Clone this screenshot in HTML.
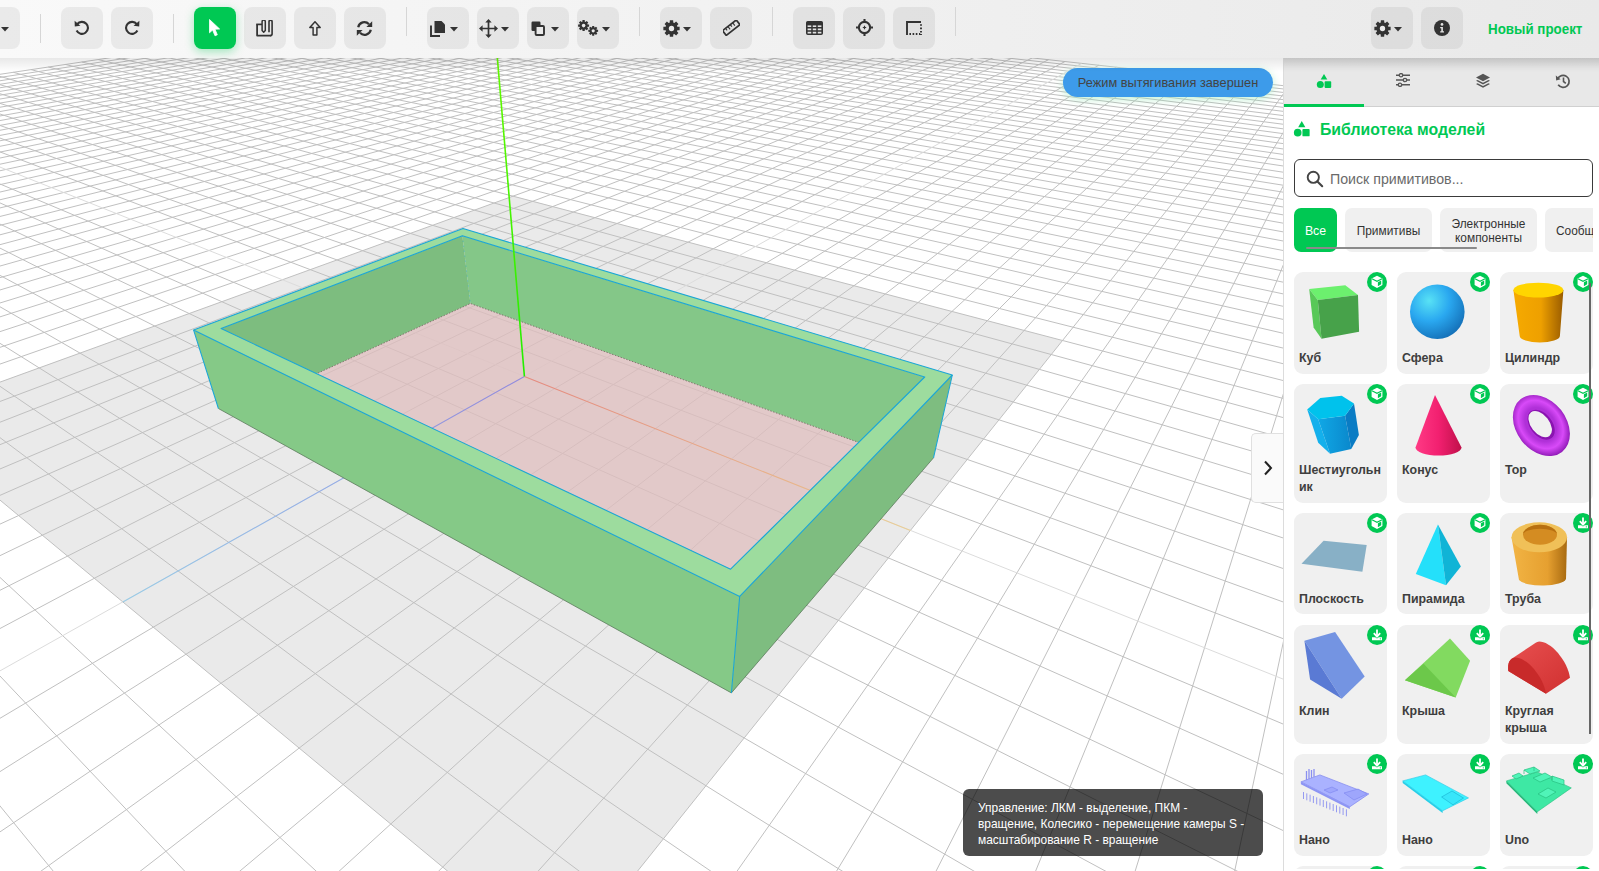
<!DOCTYPE html>
<html><head><meta charset="utf-8"><style>
*{box-sizing:border-box;margin:0;padding:0}
html,body{width:1599px;height:871px;overflow:hidden;background:#fff;font-family:"Liberation Sans",sans-serif}
#tb{position:absolute;left:0;top:0;width:1599px;height:58px;background:linear-gradient(90deg,#f9f9f9 0%,#f1f1f1 50%,#e9e9e9 100%);z-index:5}
.b{position:absolute;top:7px;width:42px;height:42px;border-radius:8px;background:rgba(0,0,0,0.06)}
.b svg{display:block}
.sep{position:absolute;width:1px;height:29px;background:#d6d6d6}
#vp{position:absolute;left:0;top:58px;width:1284px;height:813px;overflow:hidden}
#shadow{position:absolute;left:0;top:58px;width:1599px;height:14px;background:linear-gradient(180deg,rgba(0,0,0,0.09),rgba(0,0,0,0));z-index:4}
#sb{position:absolute;left:1283px;top:58px;width:316px;height:813px;background:#fff;border-left:1px solid #dcdcdc;overflow:hidden}
#pill{position:absolute;left:1063px;top:68px;width:210px;height:29px;border-radius:15px;background:#3d9bea;color:#444;font-size:12.8px;line-height:30px;text-align:center;white-space:nowrap;box-shadow:0 2px 8px rgba(0,200,83,0.25),0 0 6px rgba(255,255,255,0.8)}
#tog{position:absolute;left:1251px;top:433px;width:32px;height:70px;background:#fafafa;border:1px solid #e0e0e0;border-right:none;border-radius:5px 0 0 5px;display:flex;align-items:center;justify-content:center}
#tip{position:absolute;left:963px;top:789px;width:300px;height:67px;border-radius:6px;background:rgba(0,0,0,0.7);color:#fff;font-size:11.95px;line-height:16px;padding:11px 0 0 15px;white-space:nowrap}
</style></head>
<body>
<div id="tb"><div class="b" style="left:-22px;"><svg width="8" height="5" viewBox="0 0 8 5" style="position:absolute;left:23.3px;top:19.6px"><path d="M0,0 L8,0 L4,4.6Z" fill="#333333"/></svg></div><div class="sep" style="left:40px;top:14px"></div><div class="b" style="left:61px;"><svg style="position:absolute;left:12.5px;top:13.3px" width="16" height="15" viewBox="0 0 16 15"><path d="M3.2,4.2 A6,6 0 1 1 2.6,10.6" fill="none" stroke="#333" stroke-width="2.1"/><path d="M0.6,0.8 L0.8,6.6 L6.4,5.8Z" fill="#333"/></svg></div><div class="b" style="left:111px;"><svg style="position:absolute;left:13.3px;top:13.3px" width="16" height="15" viewBox="0 0 16 15"><g transform="translate(16,0) scale(-1,1)"><path d="M3.2,4.2 A6,6 0 1 1 2.6,10.6" fill="none" stroke="#333" stroke-width="2.1"/><path d="M0.6,0.8 L0.8,6.6 L6.4,5.8Z" fill="#333"/></g></svg></div><div class="sep" style="left:173px;top:14px"></div><div class="b" style="left:194px;background:#00c853;box-shadow:0 3px 10px rgba(0,200,83,0.35);"><svg style="position:absolute;left:15px;top:12px" width="12" height="18" viewBox="0 0 12 18"><path d="M0.5,0.5 L0.5,13.8 L3.6,11 L6,16.8 L8.3,15.8 L6,10.2 L10.6,10Z" fill="#fff" stroke="#fff" stroke-width="0.8" stroke-linejoin="round"/></svg></div><div class="b" style="left:244px;"><svg style="position:absolute;left:11.2px;top:12.8px" width="19" height="17" viewBox="0 0 19 17"><path d="M2.1,4.4 V15.6 H16.2" fill="none" stroke="#333" stroke-width="1.8" stroke-linejoin="round"/><path d="M1.2,4.4 H7" stroke="#333" stroke-width="1.7"/><path d="M7.1,10.6 V1.7 A1.6,1.6 0 0 1 10.3,1.7 V10.6 L8.7,12.3Z" fill="none" stroke="#333" stroke-width="1.5" stroke-linejoin="round"/><path d="M14,12.2 V1.7 A1.5,1.5 0 0 1 17.1,1.7 V13.8 A1.8,1.8 0 0 1 15.3,15.6" fill="none" stroke="#333" stroke-width="1.6"/></svg></div><div class="b" style="left:294px;"><svg style="position:absolute;left:14.8px;top:14px" width="12" height="15" viewBox="0 0 12 15"><path d="M6,0.7 L11.2,6.4 H7.9 V13.9 H4.1 V6.4 H0.8Z" fill="none" stroke="#333" stroke-width="1.45" stroke-linejoin="round"/></svg></div><div class="b" style="left:344px;"><svg style="position:absolute;left:12.2px;top:13.6px" width="17" height="15" viewBox="0 0 17 15"><path d="M2.2,6.2 A6.3,6.3 0 0 1 13,3.2" fill="none" stroke="#333" stroke-width="2.2"/><path d="M16.2,0.2 L16.2,6 L10.4,6Z" fill="#333"/><path d="M14.8,8.8 A6.3,6.3 0 0 1 4,11.8" fill="none" stroke="#333" stroke-width="2.2"/><path d="M0.8,14.8 L0.8,9 L6.6,9Z" fill="#333"/></svg></div><div class="sep" style="left:406px;top:7px"></div><div class="b" style="left:427px;"><svg style="position:absolute;left:3.2px;top:12.5px" width="16" height="17" viewBox="0 0 16 17"><path d="M1,5.5 V16 H10" fill="none" stroke="#333" stroke-width="1.9"/><path d="M4.5,1 H11.5 L15,4.5 V13 H4.5Z" fill="#333"/></svg><svg width="8" height="5" viewBox="0 0 8 5" style="position:absolute;left:23px;top:19.6px"><path d="M0,0 L8,0 L4,4.6Z" fill="#333333"/></svg></div><div class="b" style="left:477px;"><svg style="position:absolute;left:1.6px;top:11.6px" width="19" height="19" viewBox="0 0 19 19"><path d="M9.5,2 V17 M2,9.5 H17" stroke="#333" stroke-width="1.7"/><path d="M9.5,0 L6.3,3.6 H12.7Z M9.5,19 L6.3,15.4 H12.7Z M0,9.5 L3.6,6.3 V12.7Z M19,9.5 L15.4,6.3 V12.7Z" fill="#333"/></svg><svg width="8" height="5" viewBox="0 0 8 5" style="position:absolute;left:24px;top:19.6px"><path d="M0,0 L8,0 L4,4.6Z" fill="#333333"/></svg></div><div class="b" style="left:527px;"><svg style="position:absolute;left:4px;top:13.5px" width="14" height="15" viewBox="0 0 14 15"><rect x="0.5" y="0.5" width="9" height="9.5" rx="1.2" fill="#333"/><rect x="4.6" y="5" width="8.4" height="9" rx="1" fill="#e9e9e9" stroke="#333" stroke-width="1.9"/></svg><svg width="8" height="5" viewBox="0 0 8 5" style="position:absolute;left:24px;top:19.6px"><path d="M0,0 L8,0 L4,4.6Z" fill="#333333"/></svg></div><div class="b" style="left:577px;"><svg style="position:absolute;left:0.8px;top:13.3px" width="21" height="16" viewBox="0 0 21 16"><path d="M4.01,1.77 L4.38,1.64 L4.49,0.11 L6.71,0.11 L6.82,1.64 L7.19,1.77 L7.53,1.93 L8.69,0.93 L10.27,2.51 L9.27,3.67 L9.43,4.01 L9.56,4.38 L11.09,4.49 L11.09,6.71 L9.56,6.82 L9.43,7.19 L9.27,7.53 L10.27,8.69 L8.69,10.27 L7.53,9.27 L7.19,9.43 L6.82,9.56 L6.71,11.09 L4.49,11.09 L4.38,9.56 L4.01,9.43 L3.67,9.27 L2.51,10.27 L0.93,8.69 L1.93,7.53 L1.77,7.19 L1.64,6.82 L0.11,6.71 L0.11,4.49 L1.64,4.38 L1.77,4.01 L1.93,3.67 L0.93,2.51 L2.51,0.93 L3.67,1.93Z" fill="#333333"/><circle cx="5.6" cy="5.6" r="1.79" fill="#e9e9e9"/><path d="M13.78,7.38 L14.11,7.27 L14.21,5.90 L16.19,5.90 L16.29,7.27 L16.62,7.38 L16.93,7.53 L17.96,6.63 L19.37,8.04 L18.47,9.07 L18.62,9.38 L18.73,9.71 L20.10,9.81 L20.10,11.79 L18.73,11.89 L18.62,12.22 L18.47,12.53 L19.37,13.56 L17.96,14.97 L16.93,14.07 L16.62,14.22 L16.29,14.33 L16.19,15.70 L14.21,15.70 L14.11,14.33 L13.78,14.22 L13.47,14.07 L12.44,14.97 L11.03,13.56 L11.93,12.53 L11.78,12.22 L11.67,11.89 L10.30,11.79 L10.30,9.81 L11.67,9.71 L11.78,9.38 L11.93,9.07 L11.03,8.04 L12.44,6.63 L13.47,7.53Z" fill="#333333"/><circle cx="15.2" cy="10.8" r="1.60" fill="#e9e9e9"/></svg><svg width="8" height="5" viewBox="0 0 8 5" style="position:absolute;left:25px;top:19.6px"><path d="M0,0 L8,0 L4,4.6Z" fill="#333333"/></svg></div><div class="sep" style="left:639px;top:7px"></div><div class="b" style="left:660px;"><svg style="position:absolute;left:2.6px;top:12.6px" width="17" height="17" viewBox="0 0 17 17"><path d="M6.15,2.83 L6.68,2.63 L6.85,0.37 L10.15,0.37 L10.32,2.63 L10.85,2.83 L11.37,3.07 L13.09,1.58 L15.42,3.91 L13.93,5.63 L14.17,6.15 L14.37,6.68 L16.63,6.85 L16.63,10.15 L14.37,10.32 L14.17,10.85 L13.93,11.37 L15.42,13.09 L13.09,15.42 L11.37,13.93 L10.85,14.17 L10.32,14.37 L10.15,16.63 L6.85,16.63 L6.68,14.37 L6.15,14.17 L5.63,13.93 L3.91,15.42 L1.58,13.09 L3.07,11.37 L2.83,10.85 L2.63,10.32 L0.37,10.15 L0.37,6.85 L2.63,6.68 L2.83,6.15 L3.07,5.63 L1.58,3.91 L3.91,1.58 L5.63,3.07Z" fill="#333333"/><circle cx="8.5" cy="8.5" r="2.66" fill="#e9e9e9"/></svg><svg width="8" height="5" viewBox="0 0 8 5" style="position:absolute;left:23px;top:19.6px"><path d="M0,0 L8,0 L4,4.6Z" fill="#333333"/></svg></div><div class="b" style="left:710px;"><svg style="position:absolute;left:12.6px;top:12.8px" width="17" height="16" viewBox="0 0 17 16"><g transform="rotate(-38 8.5 8)"><rect x="-0.2" y="4.6" width="17.4" height="6" fill="none" stroke="#333" stroke-width="1.7"/><path d="M3.6,4.8 V7.2 M6.6,4.8 V8.2 M9.6,4.8 V7.2 M12.6,4.8 V8.2" stroke="#333" stroke-width="1.1"/></g></svg></div><div class="sep" style="left:772px;top:7px"></div><div class="b" style="left:793px;"><svg style="position:absolute;left:12.6px;top:14px" width="17" height="14" viewBox="0 0 17 14"><rect x="0.8" y="0.8" width="15.4" height="12.4" rx="1" fill="none" stroke="#333" stroke-width="1.6"/><rect x="0.8" y="0.8" width="15.4" height="3.6" fill="#333"/><path d="M1,6.8 H16 M1,10 H16 M6,4 V13 M11,4 V13" stroke="#333" stroke-width="1.5"/></svg></div><div class="b" style="left:843px;"><svg style="position:absolute;left:12.5px;top:12.4px" width="17" height="17" viewBox="0 0 17 17"><circle cx="8.5" cy="8.5" r="5.6" fill="none" stroke="#333" stroke-width="2.1"/><path d="M8.5,0 V4 M8.5,13 V17 M0,8.5 H4 M13,8.5 H17" stroke="#333" stroke-width="2.1"/><path d="M8.5,6.8 V10.2 M6.8,8.5 H10.2" stroke="#333" stroke-width="1.2"/></svg></div><div class="b" style="left:893px;"><svg style="position:absolute;left:13px;top:14px" width="16" height="14" viewBox="0 0 16 14"><path d="M1,14 V1 H15" fill="none" stroke="#333" stroke-width="1.9"/><path d="M15,3.2 V4.8 M15,6.6 V8.2 M15,10 V11.6 M15,13 V14 M3.4,13 H5 M6.6,13 H8.2 M9.8,13 H11.4 M13,13 H14.2" stroke="#333" stroke-width="1.9"/></svg></div><div class="sep" style="left:955px;top:7px"></div><div class="b" style="left:1371px;"><svg style="position:absolute;left:2.6px;top:12.6px" width="17" height="17" viewBox="0 0 17 17"><path d="M6.15,2.83 L6.68,2.63 L6.85,0.37 L10.15,0.37 L10.32,2.63 L10.85,2.83 L11.37,3.07 L13.09,1.58 L15.42,3.91 L13.93,5.63 L14.17,6.15 L14.37,6.68 L16.63,6.85 L16.63,10.15 L14.37,10.32 L14.17,10.85 L13.93,11.37 L15.42,13.09 L13.09,15.42 L11.37,13.93 L10.85,14.17 L10.32,14.37 L10.15,16.63 L6.85,16.63 L6.68,14.37 L6.15,14.17 L5.63,13.93 L3.91,15.42 L1.58,13.09 L3.07,11.37 L2.83,10.85 L2.63,10.32 L0.37,10.15 L0.37,6.85 L2.63,6.68 L2.83,6.15 L3.07,5.63 L1.58,3.91 L3.91,1.58 L5.63,3.07Z" fill="#333333"/><circle cx="8.5" cy="8.5" r="2.66" fill="#e9e9e9"/></svg><svg width="8" height="5" viewBox="0 0 8 5" style="position:absolute;left:23px;top:19.6px"><path d="M0,0 L8,0 L4,4.6Z" fill="#333333"/></svg></div><div class="b" style="left:1421px;"><svg style="position:absolute;left:12.8px;top:13px" width="16" height="16" viewBox="0 0 16 16"><circle cx="8" cy="8" r="8" fill="#333"/><circle cx="8" cy="4.4" r="1.35" fill="#e4e4e4"/><path d="M6.2,6.9 H8.9 V11.3 H10 V12.6 H6.2 V11.3 H7.3 V8.2 H6.2Z" fill="#e4e4e4"/></svg></div><div style="position:absolute;left:1488px;top:21px;font-size:14.6px;font-weight:bold;color:#00c853;white-space:nowrap;transform:scaleX(0.915);transform-origin:0 0">Новый проект</div></div>
<div id="vp"><svg width="1284" height="813" viewBox="0 0 1284 813" style="position:absolute;left:0;top:0">
<rect width="100%" height="100%" fill="#ffffff"/>
<path d="M513.0,138.1 L1062.5,282.5 L561.8,907.7 L-99.0,360.0Z" fill="#eaeaea"/>
<path d="M500.5,-58.9L-4038.4,623.0M500.5,-58.9L2637.2,177.4M508.5,-58.1L-4160.9,653.9M492.6,-57.8L2664.0,185.9M516.6,-57.2L-4293.1,687.2M484.5,-56.5L2692.1,194.9M524.9,-56.2L-4435.9,723.2M476.3,-55.3L2721.6,204.3M533.2,-55.3L-4590.9,762.3M468.0,-54.1L2752.4,214.2M541.7,-54.4L-4759.5,804.8M459.5,-52.8L2784.8,224.5M550.3,-53.4L-4943.8,851.2M450.9,-51.5L2818.9,235.4M558.9,-52.5L-5145.9,902.2M442.1,-50.2L2854.7,246.8M567.7,-51.5L-5368.6,958.3M433.2,-48.8L2892.5,258.9M576.6,-50.5L-5615.2,1020.5M424.1,-47.5L2932.3,271.6M585.7,-49.5L-5889.7,1089.7M414.9,-46.1L2974.4,285.1M594.8,-48.5L-6197.4,1167.3M405.4,-44.7L3019.0,299.3M604.1,-47.5L-6544.3,1254.8M395.8,-43.2L3066.3,314.4M613.5,-46.4L-6938.7,1354.2M386.1,-41.8L3116.5,330.4M623.0,-45.4L-7391.0,1468.2M376.1,-40.3L3169.9,347.5M632.7,-44.3L-7914.9,1600.3M366.0,-38.7L3226.9,365.7M642.5,-43.2L-8528.9,1755.1M355.6,-37.2L3287.7,385.1M652.4,-42.1L-9258.4,1939.0M345.1,-35.6L3352.9,405.9M662.5,-41.0L-10139.4,2161.2M334.4,-34.0L3422.9,428.2M672.7,-39.9L-11224.7,2434.8M323.4,-32.3L3498.2,452.3M683.0,-38.8L-12594.4,2780.1M312.3,-30.7L3579.5,478.3M693.6,-37.6L-14377.3,3229.6M300.9,-29.0L3667.5,506.4M704.2,-36.4L-16793.7,3838.8M289.3,-27.2L3763.2,536.9M715.0,-35.2L-20254.0,4711.2M277.4,-25.4L3867.4,570.2M726.0,-34.0L-25621.0,6064.4M265.3,-23.6L3981.5,606.6M737.2,-32.8L-35070.4,8446.8M253.0,-21.8L4106.8,646.6M748.5,-31.5L-56117.8,13753.3M240.3,-19.9L4245.3,690.8M759.9,-30.2L-89668.7,22421.1M227.5,-17.9L4398.9,739.9M771.6,-29.0L-87455.2,22419.4M214.3,-15.9L4570.4,794.7M783.4,-27.6L-85241.6,22417.7M200.9,-13.9L4763.2,856.2M795.4,-26.3L-83028.1,22416.1M187.1,-11.9L4981.2,925.8M807.6,-25.0L-80814.6,22414.4M173.1,-9.8L5230.1,1005.3M820.0,-23.6L-78601.1,22412.7M158.7,-7.6L5516.6,1096.8M832.6,-22.2L-76387.6,22411.0M144.0,-5.4L5850.2,1203.3M845.4,-20.8L-74174.1,22409.4M129.0,-3.1L6243.4,1328.8M858.4,-19.4L-71960.6,22407.7M113.6,-0.8L6713.7,1479.0M871.6,-17.9L-69747.1,22406.0M97.9,1.5L7286.5,1661.9M885.0,-16.4L-67533.5,22404.3M81.8,4.0L7999.0,1889.4M898.7,-14.9L-65320.0,22402.6M65.3,6.4L8909.8,2180.2M912.5,-13.4L-63106.5,22401.0M48.3,9.0L10114.8,2565.0M926.6,-11.8L-60893.0,22399.3M31.0,11.6L11784.0,3098.0M941.0,-10.2L-58679.5,22397.6M13.3,14.3L14250.0,3885.3M955.5,-8.6L-56466.0,22395.9M-4.9,17.0L18261.8,5166.3M970.4,-7.0L-54252.5,22394.3M-23.6,19.8L25936.4,7616.8M985.5,-5.3L-52039.0,22392.6M-42.8,22.7L46503.6,14183.9M1000.8,-3.6L-49825.4,22390.9M-62.4,25.6L70249.9,22299.9M1016.4,-1.9L-47611.9,22389.2M-82.6,28.7L67327.2,22302.1M1032.3,-0.1L-45398.4,22387.5M-103.4,31.8L64404.5,22304.3M1048.5,1.7L-43184.9,22385.9M-124.7,35.0L61481.8,22306.6M1065.0,3.5L-40971.4,22384.2M-146.6,38.3L58559.0,22308.8M1098.8,7.2L-36544.4,22380.8M-192.2,45.1L52713.6,22313.2M1116.2,9.2L-34330.9,22379.2M-216.1,48.7L49790.8,22315.4M1134.0,11.1L-32117.3,22377.5M-240.6,52.4L46868.1,22317.6M1152.0,13.1L-29903.8,22375.8M-265.9,56.2L43945.4,22319.9M1170.4,15.1L-27690.3,22374.1M-291.9,60.1L41022.7,22322.1M1189.2,17.2L-25476.8,22372.5M-318.7,64.1L38099.9,22324.3M1208.3,19.3L-23263.3,22370.8M-346.4,68.3L35177.2,22326.5M1227.8,21.5L-21049.8,22369.1M-374.9,72.6L32254.5,22328.7M1247.7,23.7L-18836.3,22367.4M-404.4,77.0L29331.8,22330.9M1268.0,25.9L-16622.8,22365.7M-434.9,81.6L26409.0,22333.1M1288.7,28.2L-14409.2,22364.1M-466.3,86.3L23486.3,22335.4M1309.8,30.6L-12195.7,22362.4M-498.8,91.2L20563.6,22337.6M1331.4,32.9L-9982.2,22360.7M-532.5,96.2L17640.8,22339.8M1353.4,35.4L-7768.7,22359.0M-567.3,101.5L14718.1,22342.0M1375.9,37.9L-5555.2,22357.4M-603.4,106.9L11795.4,22344.2M1398.8,40.4L-3341.7,22355.7M-640.8,112.5L8872.7,22346.4M1422.3,43.0L-1128.2,22354.0M-679.6,118.3L5949.9,22348.6M1446.2,45.7L1085.3,22352.3M-719.8,124.4L3027.2,22350.9M1470.7,48.4L3298.9,22350.7M-761.6,130.7L104.5,22353.1M1495.8,51.1L5512.4,22349.0M-805.0,137.2L-2818.2,22355.3M1521.4,54.0L7725.9,22347.3M-850.2,144.0L-5741.0,22357.5M1547.5,56.9L9939.4,22345.6M-897.2,151.0L-8663.7,22359.7M1574.3,59.8L12152.9,22343.9M-946.2,158.4L-11586.4,22361.9M1601.8,62.9L14366.4,22342.3M-997.3,166.1L-14509.2,22364.1M1629.8,66.0L16579.9,22340.6M-1050.6,174.1L-17431.9,22366.4M1658.6,69.1L18793.4,22338.9M-1106.2,182.4L-20354.6,22368.6M1688.0,72.4L21006.9,22337.2M-1164.4,191.2L-23277.3,22370.8M1718.1,75.7L23220.5,22335.6M-1225.3,200.3L-26200.1,22373.0M1749.0,79.1L25434.0,22333.9M-1289.2,209.9L-29122.8,22375.2M1780.7,82.6L27647.5,22332.2M-1356.1,220.0L-32045.5,22377.4M1813.2,86.2L29861.0,22330.5M-1426.4,230.5L-34968.2,22379.6M1846.5,89.9L32074.5,22328.8M-1500.3,241.6L-37891.0,22381.9M1880.7,93.7L34288.0,22327.2M-1578.1,253.3L-40813.7,22384.1M1915.8,97.6L36501.5,22325.5M-1660.1,265.7L-43736.4,22386.3M1951.8,101.6L38715.0,22323.8M-1746.7,278.7L-46659.2,22388.5M1988.8,105.7L40928.6,22322.1M-1838.2,292.4L-49581.9,22390.7M2026.8,109.9L43142.1,22320.5M-1935.1,307.0L-52504.6,22392.9M2065.9,114.2L45355.6,22318.8M-2038.0,322.4L-55427.3,22395.1M2106.1,118.6L47569.1,22317.1M-2147.2,338.8L-58350.1,22397.4M2147.5,123.2L49782.6,22315.4M-2263.6,356.3L-61272.8,22399.6M2190.0,127.9L51996.1,22313.8M-2387.7,375.0L-64195.5,22401.8M2233.8,132.8L54209.6,22312.1M-2520.3,394.9L-67118.2,22404.0M2279.0,137.7L56423.1,22310.4M-2662.5,416.3L-70041.0,22406.2M2325.5,142.9L58636.7,22308.7M-2815.3,439.2L-72963.7,22408.4M2373.4,148.2L60850.2,22307.0M-2979.8,463.9L-75886.4,22410.7M2422.8,153.7L63063.7,22305.4M-3157.5,490.6L-78809.2,22412.9M2473.8,159.3L65277.2,22303.7M-3350.1,519.6L-81731.9,22415.1M2526.5,165.1L67490.7,22302.0M-3559.5,551.0L-84654.6,22417.3M2580.9,171.1L69704.2,22300.3M-3788.0,585.3L-87577.3,22419.5M2637.2,177.4L71917.7,22298.7M-4038.4,623.0L-90500.1,22421.7" stroke="#c0c0c0" stroke-width="1" fill="none"/>
<path d="M1081.7,5.3L-38757.9,22382.5M-169.1,41.6L55636.3,22311.0" stroke="#dcdcdc" stroke-width="1" fill="none"/>
<defs><linearGradient id="gx" gradientUnits="userSpaceOnUse" x1="524.4" y1="318.4" x2="910.4" y2="472.4"><stop offset="0" stop-color="#e87060"/><stop offset="1" stop-color="#eec878"/></linearGradient><linearGradient id="gz" gradientUnits="userSpaceOnUse" x1="524.4" y1="318.4" x2="122.9" y2="543.9"><stop offset="0" stop-color="#7070e8"/><stop offset="1" stop-color="#7cc4ea"/></linearGradient></defs>
<path d="M470.4,245.5 L907.5,401.9 L723.3,606.7 L244.3,348.7Z" fill="#dfbcbd" fill-opacity="0.72"/>
<path d="M524.4,318.4L910.4,472.4" stroke="url(#gx)" stroke-width="1.1" stroke-opacity="0.7"/>
<path d="M524.4,318.4L122.9,543.9" stroke="url(#gz)" stroke-width="1.1" stroke-opacity="0.7"/>
<path d="M462.4,177.8 L924.7,319.0 L907.5,401.9 L470.4,245.5Z" fill="#84c788"/>
<path d="M462.4,177.8 L221.1,270.5 L244.3,348.7 L470.4,245.5Z" fill="#7dbd7f"/>
<path d="M244.3,348.7L470.4,245.5L907.5,401.9" stroke="#7a6060" stroke-width="0.8" fill="none" stroke-dasharray="1.5 1.5"/>
<path d="M193.6,272.1 L739.7,538.4 L731.4,634.9 L218.4,350.5Z" fill="#85c987"/>
<path d="M739.7,538.4 L952.3,317.0 L933.5,399.8 L731.4,634.9Z" fill="#7ebd80"/>
<path d="M218.4,350.5L731.4,634.9L933.5,399.8" stroke="#5a7a5a" stroke-width="0.8" fill="none"/>
<path d="M463.0,170.5 L952.3,317.0 L739.7,538.4 L193.6,272.1Z M462.4,177.8 L221.1,270.5 L730.6,511.2 L924.7,319.0Z" fill="#9ddc9e" fill-rule="evenodd"/>
<path d="M463.0,170.5 L952.3,317.0 L739.7,538.4 L193.6,272.1Z M462.4,177.8 L221.1,270.5 L730.6,511.2 L924.7,319.0Z" stroke="#1ba6d6" stroke-width="1.1" fill="none" stroke-linejoin="round"/>
<path d="M193.6,272.1L218.4,350.5M739.7,538.4L731.4,634.9M952.3,317.0L933.5,399.8" stroke="#1ba6d6" stroke-width="1.05" fill="none"/>
<path d="M462.4,177.8L470.4,245.5" stroke="#1ba6d6" stroke-width="0.8" stroke-dasharray="1 4" fill="none" opacity="0.7"/>
<defs><linearGradient id="gy" gradientUnits="userSpaceOnUse" x1="524.4" y1="318.4" x2="483.3" y2="-165.4"><stop offset="0" stop-color="#22ee00"/><stop offset="1" stop-color="#88ff00"/></linearGradient></defs>
<path d="M524.4,318.4L483.3,-165.4" stroke="url(#gy)" stroke-width="1.6"/>
</svg>
</div>
<div id="shadow"></div>
<div id="sb"><div style="position:absolute;left:0;top:0;width:316px;height:49px;background:#e8e8e8;border-bottom:1px solid #d0d0d0"></div><div style="position:absolute;left:0;top:0;width:316px;height:10px;background:linear-gradient(180deg,rgba(0,0,0,0.07),rgba(0,0,0,0))"></div><div style="position:absolute;left:0;top:46px;width:80px;height:3px;background:#00c853"></div><div style="position:absolute;left:32.4px;top:15px"><svg width="16" height="16" viewBox="0 0 16 16"><path d="M8,1 L11.3,6.6 L4.7,6.6Z" fill="#00c853"/><circle cx="4.3" cy="11.6" r="3.5" fill="#00c853"/><rect x="8.6" y="8.3" width="6.6" height="6.6" rx="0.8" fill="#00c853"/></svg></div><div style="position:absolute;left:111.4px;top:15px"><svg width="16" height="14" viewBox="0 0 16 14"><path d="M1,2.2 H15 M1,7 H15 M1,11.8 H15" stroke="#555" stroke-width="1.5"/><circle cx="6" cy="2.2" r="1.7" fill="#e8e8e8" stroke="#555" stroke-width="1.3"/><circle cx="10" cy="7" r="1.7" fill="#e8e8e8" stroke="#555" stroke-width="1.3"/><circle cx="5" cy="11.8" r="1.7" fill="#e8e8e8" stroke="#555" stroke-width="1.3"/></svg></div><div style="position:absolute;left:191.2px;top:15px"><svg width="16" height="16" viewBox="0 0 16 16"><path d="M8,0.8 L15,4.5 L8,8.2 L1,4.5Z" fill="#555"/><path d="M2.6,6.9 L1,7.8 L8,11.5 L15,7.8 L13.4,6.9 L8,9.7Z" fill="#555"/><path d="M2.6,10.2 L1,11.1 L8,14.8 L15,11.1 L13.4,10.2 L8,13Z" fill="#555"/></svg></div><div style="position:absolute;left:271px;top:15px"><svg width="16" height="16" viewBox="0 0 16 16"><path d="M2.6,6 A6,6 0 1 1 3.2,11.8" fill="none" stroke="#555" stroke-width="1.7"/><path d="M0.8,2.6 L1.2,7.4 L5.6,6.2Z" fill="#555"/><path d="M8.5,4.6 V8.5 L10.8,10.3" fill="none" stroke="#555" stroke-width="1.6"/></svg></div><div style="position:absolute;left:9px;top:61.8px"><svg width="17.5" height="17.5" viewBox="0 0 16 16"><path d="M8,1 L11.3,6.6 L4.7,6.6Z" fill="#00c853"/><circle cx="4.3" cy="11.6" r="3.5" fill="#00c853"/><rect x="8.6" y="8.3" width="6.6" height="6.6" rx="0.8" fill="#00c853"/></svg></div><div style="position:absolute;left:36px;top:63px;font-size:15.8px;font-weight:bold;color:#00c853;white-space:nowrap">Библиотека моделей</div><div style="position:absolute;left:10px;top:101px;width:299px;height:38px;border:1px solid #3a3a3a;border-radius:6px;background:#fff"></div><div style="position:absolute;left:22px;top:112px"><svg width="18" height="18" viewBox="0 0 18 18"><circle cx="7.3" cy="7.3" r="5.6" fill="none" stroke="#444" stroke-width="1.9"/><path d="M11.4,11.4 L16.2,16.2" stroke="#444" stroke-width="2.1" stroke-linecap="round"/></svg></div><div style="position:absolute;left:46px;top:113px;font-size:14.2px;color:#6a6a6a;white-space:nowrap">Поиск примитивов...</div><div style="position:absolute;left:10px;top:150px;width:299px;height:44px;overflow:hidden"><div style="position:absolute;left:0;top:0;width:43px;height:44px;border-radius:7px;background:#00c853;color:#fff;font-size:12.3px;display:flex;align-items:center;justify-content:center;padding-top:2px">Все</div><div style="position:absolute;left:51px;top:0;width:87px;height:44px;border-radius:7px;background:#f0f0f0;color:#333;font-size:11.9px;display:flex;align-items:center;justify-content:center;padding-top:2px">Примитивы</div><div style="position:absolute;left:146px;top:0;width:97px;height:44px;border-radius:7px;background:#f0f0f0;color:#333;font-size:11.9px;line-height:14px;text-align:center;display:flex;align-items:center;justify-content:center;padding-top:2px">Электронные<br>компоненты</div><div style="position:absolute;left:251px;top:0;width:90px;height:44px;border-radius:7px;background:#f0f0f0;color:#333;font-size:11.9px;display:flex;align-items:center;padding-left:11px;padding-top:2px">Сообщество</div></div><div style="position:absolute;left:22px;top:189px;width:171px;height:2px;border-radius:1px;background:#8a8a8a"></div><div style="position:absolute;left:10px;top:214px;width:93px;height:102px;border-radius:9px;background:#f0f0f0;overflow:hidden"><svg width="93" height="80" viewBox="0 0 93 80" style="position:absolute;left:0;top:0"><defs></defs><path d="M15.2,16.9 L51.3,13.2 L64,23.1 L23.8,28Z" fill="#6cf06e"/><path d="M15.2,16.9 L23.8,28 L27.5,66.8 L19.6,55.5Z" fill="#58c858"/><path d="M23.8,28 L64,23.1 L65.1,59.7 L27.5,66.8Z" fill="#47a24a"/></svg><div style="position:absolute;left:72.7px;top:0px"><svg width="20" height="20" viewBox="0 0 20 20"><circle cx="10" cy="10" r="10" fill="#00c853"/><path d="M10,3.8 L15.4,6.6 L15.4,12.9 L10,15.9 L4.6,12.9 L4.6,6.6Z" fill="#fff"/><path d="M4.9,6.8 L10,9.4 L15.1,6.8" fill="none" stroke="#00c853" stroke-width="1.2"/><path d="M10.9,10.3 L14.2,8.6 L14.2,12.3 L10.9,14.2Z" fill="#00c853"/></svg></div><div style="position:absolute;left:5px;top:78px;font-size:12.4px;font-weight:bold;color:#3e3e3e;line-height:17px;white-space:nowrap">Куб</div></div><div style="position:absolute;left:113px;top:214px;width:93px;height:102px;border-radius:9px;background:#f0f0f0;overflow:hidden"><svg width="93" height="80" viewBox="0 0 93 80" style="position:absolute;left:0;top:0"><defs><radialGradient id="sg" cx="0.35" cy="0.3" r="0.75"><stop offset="0" stop-color="#58e2f5"/><stop offset="0.5" stop-color="#2aa8f0"/><stop offset="1" stop-color="#1470b8"/></radialGradient></defs><circle cx="40.3" cy="39.7" r="27.3" fill="url(#sg)"/></svg><div style="position:absolute;left:72.7px;top:0px"><svg width="20" height="20" viewBox="0 0 20 20"><circle cx="10" cy="10" r="10" fill="#00c853"/><path d="M10,3.8 L15.4,6.6 L15.4,12.9 L10,15.9 L4.6,12.9 L4.6,6.6Z" fill="#fff"/><path d="M4.9,6.8 L10,9.4 L15.1,6.8" fill="none" stroke="#00c853" stroke-width="1.2"/><path d="M10.9,10.3 L14.2,8.6 L14.2,12.3 L10.9,14.2Z" fill="#00c853"/></svg></div><div style="position:absolute;left:5px;top:78px;font-size:12.4px;font-weight:bold;color:#3e3e3e;line-height:17px;white-space:nowrap">Сфера</div></div><div style="position:absolute;left:216px;top:214px;width:93px;height:102px;border-radius:9px;background:#f0f0f0;overflow:hidden"><svg width="93" height="80" viewBox="0 0 93 80" style="position:absolute;left:0;top:0"><defs><linearGradient id="cg" x1="0" x2="1"><stop offset="0" stop-color="#f6aa00"/><stop offset="0.55" stop-color="#eea000"/><stop offset="1" stop-color="#9a5c00"/></linearGradient></defs><path d="M13.4,18.1 L19.7,64 A20.1,6.5 0 0 0 59.9,64 L63.4,18.1Z" fill="url(#cg)"/><ellipse cx="38.4" cy="18.1" rx="25" ry="7.4" fill="#ffd500"/></svg><div style="position:absolute;left:72.7px;top:0px"><svg width="20" height="20" viewBox="0 0 20 20"><circle cx="10" cy="10" r="10" fill="#00c853"/><path d="M10,3.8 L15.4,6.6 L15.4,12.9 L10,15.9 L4.6,12.9 L4.6,6.6Z" fill="#fff"/><path d="M4.9,6.8 L10,9.4 L15.1,6.8" fill="none" stroke="#00c853" stroke-width="1.2"/><path d="M10.9,10.3 L14.2,8.6 L14.2,12.3 L10.9,14.2Z" fill="#00c853"/></svg></div><div style="position:absolute;left:5px;top:78px;font-size:12.4px;font-weight:bold;color:#3e3e3e;line-height:17px;white-space:nowrap">Цилиндр</div></div><div style="position:absolute;left:10px;top:326px;width:93px;height:119px;border-radius:9px;background:#f0f0f0;overflow:hidden"><svg width="93" height="80" viewBox="0 0 93 80" style="position:absolute;left:0;top:0"><defs><linearGradient id="hg" x1="0" x2="1"><stop offset="0" stop-color="#10a8e6"/><stop offset="1" stop-color="#0a88cc"/></linearGradient></defs><path d="M13.2,25.6 L24.2,35.3 L36,69.7 L24.2,58.7Z" fill="#14b0ec"/><path d="M24.2,35.3 L51.1,31.8 L57.3,64.9 L36,69.7Z" fill="url(#hg)"/><path d="M51.1,31.8 L60,19.4 L64.9,51.1 L57.3,64.9Z" fill="#0a7cc4"/><path d="M13.2,25.6 L26.3,13.9 L47.7,11.8 L60,19.4 L51.1,31.8 L24.2,35.3Z" fill="#00c2ec"/></svg><div style="position:absolute;left:72.7px;top:0px"><svg width="20" height="20" viewBox="0 0 20 20"><circle cx="10" cy="10" r="10" fill="#00c853"/><path d="M10,3.8 L15.4,6.6 L15.4,12.9 L10,15.9 L4.6,12.9 L4.6,6.6Z" fill="#fff"/><path d="M4.9,6.8 L10,9.4 L15.1,6.8" fill="none" stroke="#00c853" stroke-width="1.2"/><path d="M10.9,10.3 L14.2,8.6 L14.2,12.3 L10.9,14.2Z" fill="#00c853"/></svg></div><div style="position:absolute;left:5px;top:78px;font-size:12.4px;font-weight:bold;color:#3e3e3e;line-height:17px;white-space:nowrap">Шестиугольн<br>ик</div></div><div style="position:absolute;left:113px;top:326px;width:93px;height:119px;border-radius:9px;background:#f0f0f0;overflow:hidden"><svg width="93" height="80" viewBox="0 0 93 80" style="position:absolute;left:0;top:0"><defs><linearGradient id="kg" x1="0" x2="1"><stop offset="0" stop-color="#ff3a85"/><stop offset="0.5" stop-color="#f22070"/><stop offset="1" stop-color="#c0104a"/></linearGradient></defs><path d="M38,10.9 L64.5,63.5 A23,8 0 0 1 18.5,63.5Z" fill="url(#kg)"/></svg><div style="position:absolute;left:72.7px;top:0px"><svg width="20" height="20" viewBox="0 0 20 20"><circle cx="10" cy="10" r="10" fill="#00c853"/><path d="M10,3.8 L15.4,6.6 L15.4,12.9 L10,15.9 L4.6,12.9 L4.6,6.6Z" fill="#fff"/><path d="M4.9,6.8 L10,9.4 L15.1,6.8" fill="none" stroke="#00c853" stroke-width="1.2"/><path d="M10.9,10.3 L14.2,8.6 L14.2,12.3 L10.9,14.2Z" fill="#00c853"/></svg></div><div style="position:absolute;left:5px;top:78px;font-size:12.4px;font-weight:bold;color:#3e3e3e;line-height:17px;white-space:nowrap">Конус</div></div><div style="position:absolute;left:216px;top:326px;width:93px;height:119px;border-radius:9px;background:#f0f0f0;overflow:hidden"><svg width="93" height="80" viewBox="0 0 93 80" style="position:absolute;left:0;top:0"><defs><radialGradient id="tg" cx="0.48" cy="0.5" r="0.55"><stop offset="0.5" stop-color="#b030d8"/><stop offset="0.72" stop-color="#d84af8"/><stop offset="1" stop-color="#8010a8"/></radialGradient></defs><g transform="rotate(52 41.4 41.5)"><ellipse cx="41.4" cy="41.5" rx="33.5" ry="25" fill="url(#tg)"/><ellipse cx="40.6" cy="41.2" rx="17" ry="11" fill="#8a14b0"/><ellipse cx="39.6" cy="41.6" rx="15" ry="9.2" fill="#f0f0f0"/></g></svg><div style="position:absolute;left:72.7px;top:0px"><svg width="20" height="20" viewBox="0 0 20 20"><circle cx="10" cy="10" r="10" fill="#00c853"/><path d="M10,3.8 L15.4,6.6 L15.4,12.9 L10,15.9 L4.6,12.9 L4.6,6.6Z" fill="#fff"/><path d="M4.9,6.8 L10,9.4 L15.1,6.8" fill="none" stroke="#00c853" stroke-width="1.2"/><path d="M10.9,10.3 L14.2,8.6 L14.2,12.3 L10.9,14.2Z" fill="#00c853"/></svg></div><div style="position:absolute;left:5px;top:78px;font-size:12.4px;font-weight:bold;color:#3e3e3e;line-height:17px;white-space:nowrap">Тор</div></div><div style="position:absolute;left:10px;top:455px;width:93px;height:101px;border-radius:9px;background:#f0f0f0;overflow:hidden"><svg width="93" height="80" viewBox="0 0 93 80" style="position:absolute;left:0;top:0"><defs></defs><path d="M7.5,50.7 L29.6,27.8 L72.7,32.1 L68.4,58.8Z" fill="#88b0c6"/></svg><div style="position:absolute;left:72.7px;top:0px"><svg width="20" height="20" viewBox="0 0 20 20"><circle cx="10" cy="10" r="10" fill="#00c853"/><path d="M10,3.8 L15.4,6.6 L15.4,12.9 L10,15.9 L4.6,12.9 L4.6,6.6Z" fill="#fff"/><path d="M4.9,6.8 L10,9.4 L15.1,6.8" fill="none" stroke="#00c853" stroke-width="1.2"/><path d="M10.9,10.3 L14.2,8.6 L14.2,12.3 L10.9,14.2Z" fill="#00c853"/></svg></div><div style="position:absolute;left:5px;top:78px;font-size:12.4px;font-weight:bold;color:#3e3e3e;line-height:17px;white-space:nowrap">Плоскость</div></div><div style="position:absolute;left:113px;top:455px;width:93px;height:101px;border-radius:9px;background:#f0f0f0;overflow:hidden"><svg width="93" height="80" viewBox="0 0 93 80" style="position:absolute;left:0;top:0"><defs></defs><path d="M40.9,11.4 L18.8,61.1 L49,72.3Z" fill="#24e0fa"/><path d="M40.9,11.4 L49,72.3 L63.9,53.6Z" fill="#10b4d6"/></svg><div style="position:absolute;left:72.7px;top:0px"><svg width="20" height="20" viewBox="0 0 20 20"><circle cx="10" cy="10" r="10" fill="#00c853"/><path d="M10,3.8 L15.4,6.6 L15.4,12.9 L10,15.9 L4.6,12.9 L4.6,6.6Z" fill="#fff"/><path d="M4.9,6.8 L10,9.4 L15.1,6.8" fill="none" stroke="#00c853" stroke-width="1.2"/><path d="M10.9,10.3 L14.2,8.6 L14.2,12.3 L10.9,14.2Z" fill="#00c853"/></svg></div><div style="position:absolute;left:5px;top:78px;font-size:12.4px;font-weight:bold;color:#3e3e3e;line-height:17px;white-space:nowrap">Пирамида</div></div><div style="position:absolute;left:216px;top:455px;width:93px;height:101px;border-radius:9px;background:#f0f0f0;overflow:hidden"><svg width="93" height="80" viewBox="0 0 93 80" style="position:absolute;left:0;top:0"><defs><linearGradient id="ug" x1="0" x2="1"><stop offset="0" stop-color="#f2b444"/><stop offset="0.65" stop-color="#e6a030"/><stop offset="1" stop-color="#a86a10"/></linearGradient></defs><path d="M11.5,24.3 L19,67 A24,7.5 0 0 0 66,66 L67,24.3Z" fill="url(#ug)"/><ellipse cx="39.3" cy="24.3" rx="27.8" ry="15" fill="#f0c058"/><ellipse cx="40" cy="21.8" rx="17" ry="10" fill="#d48c22"/><path d="M23,21.8 A17,10 0 0 1 57,21.8 A17,6 0 0 0 23,21.8Z" fill="#b87010"/></svg><div style="position:absolute;left:72.7px;top:0px"><svg width="20" height="20" viewBox="0 0 20 20"><circle cx="10" cy="10" r="10" fill="#00c853"/><path d="M10,4.5 V10.5" stroke="#fff" stroke-width="1.8"/><path d="M6.8,8.2 L10,11.6 L13.2,8.2" fill="none" stroke="#fff" stroke-width="1.8"/><path d="M5,12.3 H8.2 L10,13.6 L11.8,12.3 H15 V15.2 H5Z" fill="#fff"/><circle cx="13.3" cy="13.8" r="0.6" fill="#00c853"/></svg></div><div style="position:absolute;left:5px;top:78px;font-size:12.4px;font-weight:bold;color:#3e3e3e;line-height:17px;white-space:nowrap">Труба</div></div><div style="position:absolute;left:10px;top:567px;width:93px;height:119px;border-radius:9px;background:#f0f0f0;overflow:hidden"><svg width="93" height="80" viewBox="0 0 93 80" style="position:absolute;left:0;top:0"><defs></defs><path d="M10.4,15.7 L41.1,7.1 L70.7,51.6 L47.7,73.7Z" fill="#7494e2"/><path d="M10.4,15.7 L47.7,73.7 L16.1,54.4Z" fill="#5a7ad4"/></svg><div style="position:absolute;left:72.7px;top:0px"><svg width="20" height="20" viewBox="0 0 20 20"><circle cx="10" cy="10" r="10" fill="#00c853"/><path d="M10,4.5 V10.5" stroke="#fff" stroke-width="1.8"/><path d="M6.8,8.2 L10,11.6 L13.2,8.2" fill="none" stroke="#fff" stroke-width="1.8"/><path d="M5,12.3 H8.2 L10,13.6 L11.8,12.3 H15 V15.2 H5Z" fill="#fff"/><circle cx="13.3" cy="13.8" r="0.6" fill="#00c853"/></svg></div><div style="position:absolute;left:5px;top:78px;font-size:12.4px;font-weight:bold;color:#3e3e3e;line-height:17px;white-space:nowrap">Клин</div></div><div style="position:absolute;left:113px;top:567px;width:93px;height:119px;border-radius:9px;background:#f0f0f0;overflow:hidden"><svg width="93" height="80" viewBox="0 0 93 80" style="position:absolute;left:0;top:0"><defs></defs><path d="M7.9,55.3 L53,13.4 L73.1,35.8 L58.7,72.5Z" fill="#82da60"/><path d="M7.9,55.3 L26.6,38.7 L58.7,72.5Z" fill="#6cc84a"/></svg><div style="position:absolute;left:72.7px;top:0px"><svg width="20" height="20" viewBox="0 0 20 20"><circle cx="10" cy="10" r="10" fill="#00c853"/><path d="M10,4.5 V10.5" stroke="#fff" stroke-width="1.8"/><path d="M6.8,8.2 L10,11.6 L13.2,8.2" fill="none" stroke="#fff" stroke-width="1.8"/><path d="M5,12.3 H8.2 L10,13.6 L11.8,12.3 H15 V15.2 H5Z" fill="#fff"/><circle cx="13.3" cy="13.8" r="0.6" fill="#00c853"/></svg></div><div style="position:absolute;left:5px;top:78px;font-size:12.4px;font-weight:bold;color:#3e3e3e;line-height:17px;white-space:nowrap">Крыша</div></div><div style="position:absolute;left:216px;top:567px;width:93px;height:119px;border-radius:9px;background:#f0f0f0;overflow:hidden"><svg width="93" height="80" viewBox="0 0 93 80" style="position:absolute;left:0;top:0"><defs><linearGradient id="rr" x1="0" y1="0" x2="1" y2="1"><stop offset="0" stop-color="#e85050"/><stop offset="1" stop-color="#d03030"/></linearGradient></defs><path d="M8.1,43.2 L8.2,40.7 L8.6,38.4 L9.3,36.5 L10.4,35.0 L11.7,33.8 L35.7,17.8 L37.3,17.0 L39.1,16.6 L41.2,16.7 L43.4,17.2 L45.7,18.1 L48.1,19.4 L50.6,21.1 L53.1,23.1 L55.6,25.4 L58.0,28.0 L60.2,30.9 L62.4,33.9 L64.3,37.1 L66.0,40.3 L67.4,43.5 L68.6,46.7 L69.4,49.8 L70.0,52.8 L46.0,68.8 L8.3,46.0Z" fill="url(#rr)"/><path d="M8.3,46.0 L8.1,43.2 L8.2,40.7 L8.6,38.4 L9.3,36.5 L10.4,35.0 L11.7,33.8 L13.3,33.0 L15.1,32.6 L17.2,32.7 L19.4,33.2 L21.7,34.1 L24.1,35.4 L26.6,37.1 L29.1,39.1 L31.6,41.4 L34.0,44.0 L36.2,46.9 L38.4,49.9 L40.3,53.1 L42.0,56.3 L43.4,59.5 L44.6,62.7 L45.4,65.8 L46.0,68.8Z" fill="#c82a2a"/></svg><div style="position:absolute;left:72.7px;top:0px"><svg width="20" height="20" viewBox="0 0 20 20"><circle cx="10" cy="10" r="10" fill="#00c853"/><path d="M10,4.5 V10.5" stroke="#fff" stroke-width="1.8"/><path d="M6.8,8.2 L10,11.6 L13.2,8.2" fill="none" stroke="#fff" stroke-width="1.8"/><path d="M5,12.3 H8.2 L10,13.6 L11.8,12.3 H15 V15.2 H5Z" fill="#fff"/><circle cx="13.3" cy="13.8" r="0.6" fill="#00c853"/></svg></div><div style="position:absolute;left:5px;top:78px;font-size:12.4px;font-weight:bold;color:#3e3e3e;line-height:17px;white-space:nowrap">Круглая<br>крыша</div></div><div style="position:absolute;left:10px;top:696px;width:93px;height:102px;border-radius:9px;background:#f0f0f0;overflow:hidden"><svg width="93" height="80" viewBox="0 0 93 80" style="position:absolute;left:0;top:0"><defs></defs><path d="M9.5,38.0 V45.0" stroke="#8a90f0" stroke-width="0.9"/><path d="M12.8,39.3 V46.3" stroke="#8a90f0" stroke-width="0.9"/><path d="M16.1,40.7 V47.7" stroke="#8a90f0" stroke-width="0.9"/><path d="M19.4,42.0 V49.0" stroke="#8a90f0" stroke-width="0.9"/><path d="M22.7,43.3 V50.3" stroke="#8a90f0" stroke-width="0.9"/><path d="M26.0,44.6 V51.6" stroke="#8a90f0" stroke-width="0.9"/><path d="M29.3,46.0 V53.0" stroke="#8a90f0" stroke-width="0.9"/><path d="M32.6,47.3 V54.3" stroke="#8a90f0" stroke-width="0.9"/><path d="M35.9,48.6 V55.6" stroke="#8a90f0" stroke-width="0.9"/><path d="M39.2,50.0 V57.0" stroke="#8a90f0" stroke-width="0.9"/><path d="M42.5,51.3 V58.3" stroke="#8a90f0" stroke-width="0.9"/><path d="M45.8,52.6 V59.6" stroke="#8a90f0" stroke-width="0.9"/><path d="M49.1,54.0 V61.0" stroke="#8a90f0" stroke-width="0.9"/><path d="M52.4,55.3 V62.3" stroke="#8a90f0" stroke-width="0.9"/><path d="M6.9,27.9 L25.9,20.9 L74.8,39.9 L55.8,52.8Z" fill="#aab2ff" stroke="#7c84ee" stroke-width="0.7"/><path d="M6.9,27.9 L55.8,52.8 L55.8,55 L6.9,30.2Z" fill="#8c94f4"/><path d="M12.5,17 V26 M15,15 V25 M17.5,16 V24 M20,15 V23" stroke="#8a90f0" stroke-width="1.3"/><path d="M50,39 L64,35 L73,40 L60,46Z" fill="#9ea6fc" stroke="#7c84ee" stroke-width="0.6"/><path d="M30,36 L38,33 L44,36 L36,39Z" fill="#9ea6fc" stroke="#7c84ee" stroke-width="0.6"/></svg><div style="position:absolute;left:72.7px;top:0px"><svg width="20" height="20" viewBox="0 0 20 20"><circle cx="10" cy="10" r="10" fill="#00c853"/><path d="M10,4.5 V10.5" stroke="#fff" stroke-width="1.8"/><path d="M6.8,8.2 L10,11.6 L13.2,8.2" fill="none" stroke="#fff" stroke-width="1.8"/><path d="M5,12.3 H8.2 L10,13.6 L11.8,12.3 H15 V15.2 H5Z" fill="#fff"/><circle cx="13.3" cy="13.8" r="0.6" fill="#00c853"/></svg></div><div style="position:absolute;left:5px;top:78px;font-size:12.4px;font-weight:bold;color:#3e3e3e;line-height:17px;white-space:nowrap">Нано</div></div><div style="position:absolute;left:113px;top:696px;width:93px;height:102px;border-radius:9px;background:#f0f0f0;overflow:hidden"><svg width="93" height="80" viewBox="0 0 93 80" style="position:absolute;left:0;top:0"><defs></defs><path d="M5.7,26.9 L28.6,20.9 L71.5,43.9 L45.6,56.8Z" fill="#3ef2ff" stroke="#22c8e6" stroke-width="0.6"/><path d="M5.7,26.9 L45.6,56.8 L45.6,59 L5.7,29Z" fill="#24cfe8"/><path d="M44.6,43 L55,37 L66.5,44 L56,50.8Z" fill="#38e6fa" stroke="#1cb8d6" stroke-width="0.7"/></svg><div style="position:absolute;left:72.7px;top:0px"><svg width="20" height="20" viewBox="0 0 20 20"><circle cx="10" cy="10" r="10" fill="#00c853"/><path d="M10,4.5 V10.5" stroke="#fff" stroke-width="1.8"/><path d="M6.8,8.2 L10,11.6 L13.2,8.2" fill="none" stroke="#fff" stroke-width="1.8"/><path d="M5,12.3 H8.2 L10,13.6 L11.8,12.3 H15 V15.2 H5Z" fill="#fff"/><circle cx="13.3" cy="13.8" r="0.6" fill="#00c853"/></svg></div><div style="position:absolute;left:5px;top:78px;font-size:12.4px;font-weight:bold;color:#3e3e3e;line-height:17px;white-space:nowrap">Нано</div></div><div style="position:absolute;left:216px;top:696px;width:93px;height:102px;border-radius:9px;background:#f0f0f0;overflow:hidden"><svg width="93" height="80" viewBox="0 0 93 80" style="position:absolute;left:0;top:0"><defs></defs><path d="M6.4,26.9 L37.3,17.9 L71.3,33.9 L37.3,57.8Z" fill="#3ee8a4" stroke="#26c080" stroke-width="0.6"/><path d="M6.4,26.9 L37.3,57.8 L37.3,60 L6.4,29.2Z" fill="#22b878"/><path d="M12,22 L19,19 L23,22 L16,25Z M24,16 L34,13 L40,17 L30,20Z M33,24 L45,19 L52,23 L40,28Z M52,22 L64,26 L64,31 L52,27Z M38,40 L48,34 L56,38 L46,44Z" fill="#50f4b8" stroke="#26c080" stroke-width="0.7"/><path d="M24,16 V20 M34,13 V17 M52,22 V26" stroke="#26c080" stroke-width="0.7"/></svg><div style="position:absolute;left:72.7px;top:0px"><svg width="20" height="20" viewBox="0 0 20 20"><circle cx="10" cy="10" r="10" fill="#00c853"/><path d="M10,4.5 V10.5" stroke="#fff" stroke-width="1.8"/><path d="M6.8,8.2 L10,11.6 L13.2,8.2" fill="none" stroke="#fff" stroke-width="1.8"/><path d="M5,12.3 H8.2 L10,13.6 L11.8,12.3 H15 V15.2 H5Z" fill="#fff"/><circle cx="13.3" cy="13.8" r="0.6" fill="#00c853"/></svg></div><div style="position:absolute;left:5px;top:78px;font-size:12.4px;font-weight:bold;color:#3e3e3e;line-height:17px;white-space:nowrap">Uno</div></div><div style="position:absolute;left:10px;top:808px;width:93px;height:102px;border-radius:9px;background:#f0f0f0;overflow:hidden"><div style="position:absolute;left:72.7px;top:0px"><svg width="20" height="20" viewBox="0 0 20 20"><circle cx="10" cy="10" r="10" fill="#00c853"/><path d="M10,4.5 V10.5" stroke="#fff" stroke-width="1.8"/><path d="M6.8,8.2 L10,11.6 L13.2,8.2" fill="none" stroke="#fff" stroke-width="1.8"/><path d="M5,12.3 H8.2 L10,13.6 L11.8,12.3 H15 V15.2 H5Z" fill="#fff"/><circle cx="13.3" cy="13.8" r="0.6" fill="#00c853"/></svg></div></div><div style="position:absolute;left:113px;top:808px;width:93px;height:102px;border-radius:9px;background:#f0f0f0;overflow:hidden"><div style="position:absolute;left:72.7px;top:0px"><svg width="20" height="20" viewBox="0 0 20 20"><circle cx="10" cy="10" r="10" fill="#00c853"/><path d="M10,4.5 V10.5" stroke="#fff" stroke-width="1.8"/><path d="M6.8,8.2 L10,11.6 L13.2,8.2" fill="none" stroke="#fff" stroke-width="1.8"/><path d="M5,12.3 H8.2 L10,13.6 L11.8,12.3 H15 V15.2 H5Z" fill="#fff"/><circle cx="13.3" cy="13.8" r="0.6" fill="#00c853"/></svg></div></div><div style="position:absolute;left:216px;top:808px;width:93px;height:102px;border-radius:9px;background:#f0f0f0;overflow:hidden"><div style="position:absolute;left:72.7px;top:0px"><svg width="20" height="20" viewBox="0 0 20 20"><circle cx="10" cy="10" r="10" fill="#00c853"/><path d="M10,4.5 V10.5" stroke="#fff" stroke-width="1.8"/><path d="M6.8,8.2 L10,11.6 L13.2,8.2" fill="none" stroke="#fff" stroke-width="1.8"/><path d="M5,12.3 H8.2 L10,13.6 L11.8,12.3 H15 V15.2 H5Z" fill="#fff"/><circle cx="13.3" cy="13.8" r="0.6" fill="#00c853"/></svg></div></div><div style="position:absolute;left:0;top:811px;width:316px;height:4px;background:#fff"></div><div style="position:absolute;left:305px;top:225px;width:2px;height:451px;background:#666"></div></div>
<div id="pill">Режим вытягивания завершен</div>
<div id="tog"><svg width="10" height="16" viewBox="0 0 10 16"><path d="M2,1.5 L8,8 L2,14.5" fill="none" stroke="#222" stroke-width="2"/></svg></div>
<div id="tip">Управление: ЛКМ - выделение, ПКМ -<br>вращение, Колесико - перемещение камеры S -<br>масштабирование R - вращение</div>
</body></html>
